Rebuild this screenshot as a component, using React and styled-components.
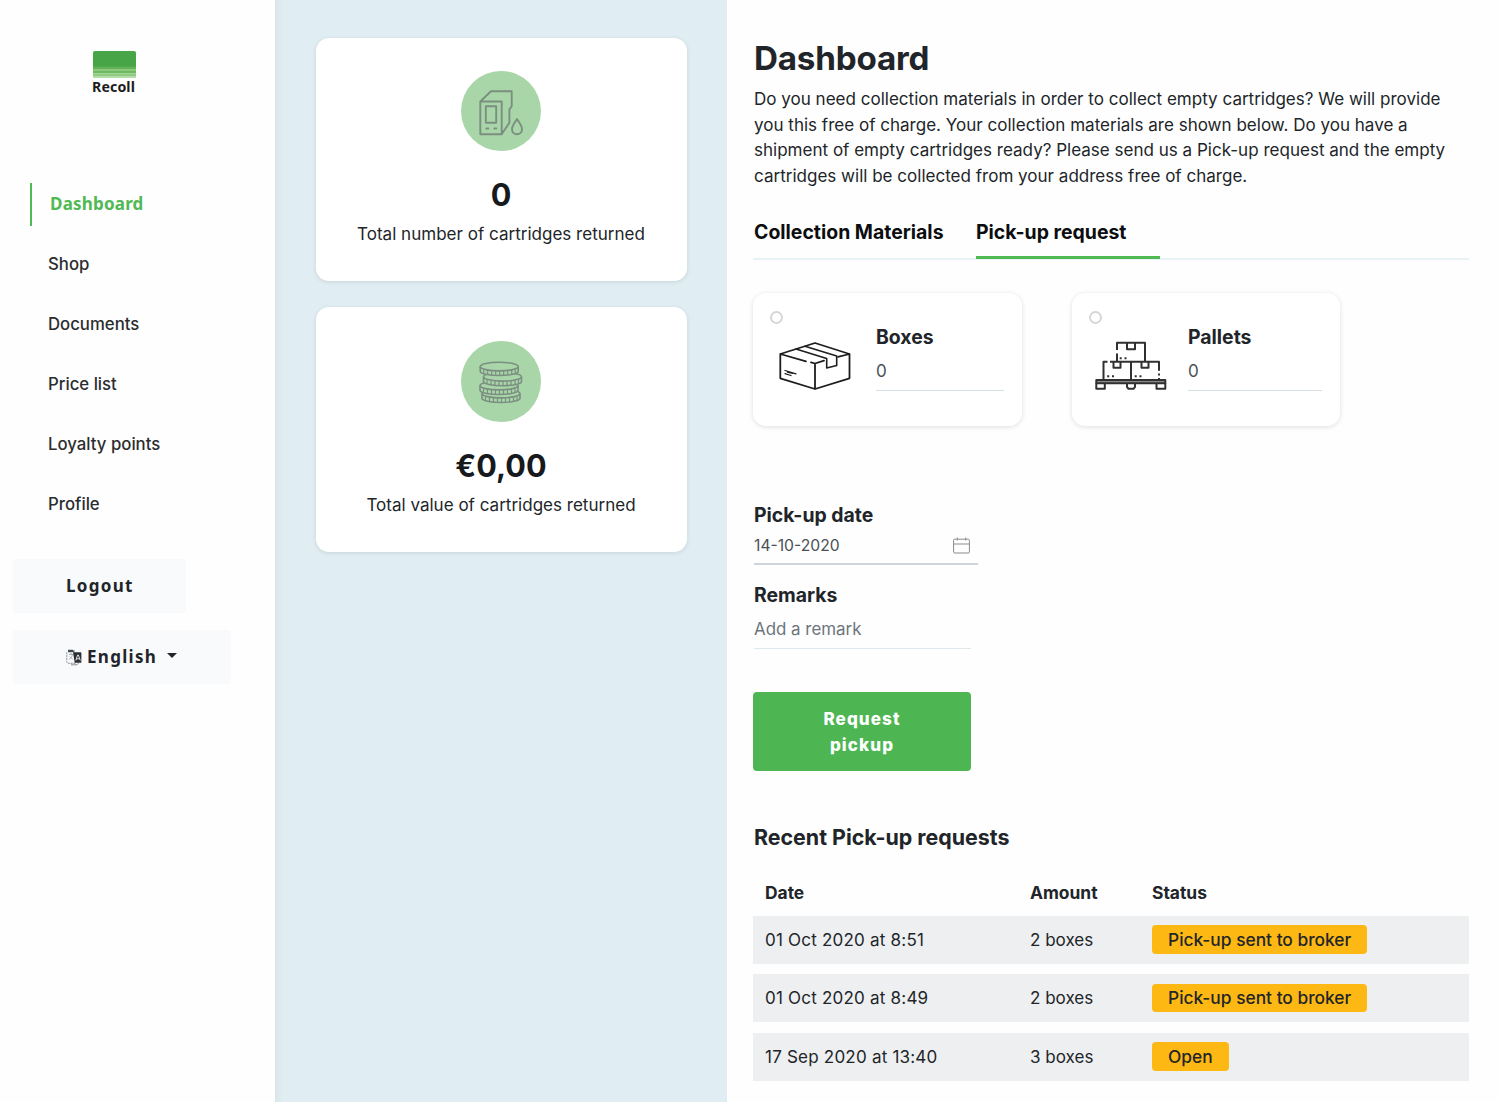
import React from "react";
import styled, { createGlobalStyle, css } from "styled-components";

const GlobalStyle = createGlobalStyle`
  * { box-sizing: border-box; }
  body {
    margin: 0;
    background: #fefefe;
    color: #212529;
    font-family: Inter, "Liberation Sans", sans-serif;
    font-size: 17.05px;
    line-height: 25.6px;
  }
  button, input { font: inherit; color: inherit; }
  h1, h2, h3, p { margin: 0; }
`;

const Layout = styled.div`
  display: grid;
  grid-template-columns: 275px 452px 1fr;
  height: 1102px;
  overflow: hidden;
`;

/* ---------- sidebar ---------- */

const Sidebar = styled.aside`
  display: flex;
  flex-direction: column;
  align-items: flex-start;
  padding: 51px 13px 0;
`;

const Brand = styled.div`
  display: flex;
  flex-direction: column;
  width: 45px;
  height: 132px;
  margin-left: 79px;
`;

const BrandMark = styled.div`
  height: 27px;
  width: 43px;
  margin-left: 1px;
  border-radius: 2px 2px 0 0;
  background: linear-gradient(
    #48a547 0 15px,
    #64b257 16.5px 18px,
    #8cc97c 18.5px 19.5px,
    #6fba61 20px 21.5px,
    #a2d596 22px 23px,
    #8fcb82 23.5px 24.5px,
    #b4ddaa 25px
  );
`;

const BrandName = styled.span`
  font: 700 14.2px/18px "Noto Sans", sans-serif;
  letter-spacing: 0.1px;
  color: #1c1c1c;
`;

const Nav = styled.nav`
  display: flex;
  flex-direction: column;
  gap: 17px;
  margin-left: 17px;
`;

const NavItem = styled.a`
  display: flex;
  align-items: center;
  height: 43px;
  padding-left: 16px;
  border-left: 2px solid transparent;
  font-size: 16.75px;
  font-weight: 500;
  color: #2b2d2f;
  ${(p) =>
    p.$active &&
    css`
      padding: 0 0 2px 18px;
      border-color: #50b954;
      color: #50b954;
      font-family: "Noto Sans", sans-serif;
      font-size: 17px;
      font-weight: 700;
      letter-spacing: 0.2px;
    `}
`;

const SideButton = styled.button`
  display: flex;
  align-items: center;
  gap: 5px;
  width: ${(p) => p.$width}px;
  height: 54px;
  margin-top: ${(p) => p.$top}px;
  padding: 0 0 0 53px;
  border: 0;
  border-radius: 3px;
  background: #f9fafb;
  font-family: "Noto Sans", sans-serif;
  font-size: 17px;
  font-weight: 700;
  letter-spacing: 1.3px;
`;

const Caret = styled.span`
  margin: -3px 0 0 5px;
  border: 5px solid transparent;
  border-top-color: #212529;
  border-bottom: 0;
`;

/* ---------- statistics ---------- */

const Stats = styled.section`
  display: flex;
  flex-direction: column;
  gap: 26px;
  padding: 37.5px 40.5px 0;
  background: linear-gradient(90deg, #d8e5e9, #e0edf2 8px);
`;

const StatCard = styled.article`
  display: flex;
  flex-direction: column;
  align-items: center;
  height: ${(p) => p.$height}px;
  padding-top: ${(p) => p.$top}px;
  border-radius: 13px;
  background: #fff;
  box-shadow: 0 1px 4px rgba(60, 70, 70, 0.14);
`;

const StatIcon = styled.div`
  width: 80px;
  height: ${(p) => p.$height}px;
  border-radius: 50%;
  background: #a9d6a8;
`;

const StatValue = styled.strong`
  margin-top: 25px;
  font-size: 30.6px;
  line-height: 38px;
  color: #171a1d;
`;

const StatLabel = styled.span`
  margin-top: 7px;
`;

/* ---------- main ---------- */

const Main = styled.main`
  display: flex;
  flex-direction: column;
  align-items: flex-start;
  padding: 38px 30px 0 26px;
`;

const Title = styled.h1`
  margin-left: 1px;
  font-size: 33.2px;
  line-height: 40px;
  letter-spacing: -0.2px;
`;

const Intro = styled.p`
  width: 710px;
  margin: 8px 0 0 1px;
`;

const Tabs = styled.div`
  display: flex;
  width: 716px;
  height: 43px;
  margin: 29px 0 0 0;
  padding-left: 1px;
  border-bottom: 2px solid #e8f1f4;
`;

const Tab = styled.div`
  width: ${(p) => p.$width}px;
  height: 42px;
  padding-top: 3px;
  border-bottom: 3px solid ${(p) => (p.$active ? "#50b954" : "transparent")};
  font-size: 19.45px;
  font-weight: 700;
  color: #0b0d0f;
`;

const Options = styled.div`
  display: flex;
  gap: 50px;
  margin-top: 33px;
`;

const Option = styled.label`
  display: grid;
  grid-template-columns: ${(p) => p.$icon}px 1fr;
  width: ${(p) => p.$width}px;
  height: 133px;
  padding: 18px 18px 0 17px;
  border-radius: 13px;
  background: #fff;
  box-shadow: 0 1px 5px rgba(0, 0, 0, 0.13);
`;

const OptionPicture = styled.div`
  display: flex;
  flex-direction: column;
  gap: 17px;
`;

const Radio = styled.span`
  width: 13px;
  height: 13px;
  border: 2px solid #d6d6d6;
  border-radius: 50%;
  background: #fff;
`;

const OptionFields = styled.div`
  display: flex;
  flex-direction: column;
  padding-top: 14px;
`;

const FieldTitle = styled.h3`
  font-size: 19.4px;
  font-weight: 700;
  line-height: 25px;
`;

const Quantity = styled.span`
  height: 41px;
  padding-top: 8px;
  border-bottom: 1.5px solid #d6e0e4;
  color: #495057;
`;

const Form = styled.form`
  display: flex;
  flex-direction: column;
  align-items: flex-start;
  margin: 77px 0 0 1px;
`;

const DateField = styled.div`
  display: flex;
  justify-content: space-between;
  align-items: center;
  width: 224px;
  height: 37px;
  margin-bottom: 18px;
  padding: 0 8px 1px 0;
  border-bottom: 2px solid #ced6dc;
  font-size: 15.7px;
  color: #495057;
`;

const RemarkField = styled.input`
  width: 217px;
  height: 41px;
  padding: 1px 0 0;
  border: 0;
  border-bottom: 1.5px solid #dfe8ec;
  background: none;
  font-size: 16.9px;
  &::placeholder { color: #6c757d; opacity: 1; }
`;

const Submit = styled.button`
  width: 218px;
  height: 79px;
  margin: 43px 0 0 -1px;
  padding: 0 60px;
  border: 0;
  border-radius: 4px;
  background: #4db653;
  color: #fff;
  font-weight: 800;
  line-height: 25.4px;
  letter-spacing: 1.1px;
`;

const RecentTitle = styled.h2`
  margin: 52px 0 0 1px;
  font-size: 21.4px;
  line-height: 28px;
`;

const Requests = styled.div`
  display: flex;
  flex-direction: column;
  gap: 10.4px;
  width: 716px;
  margin-top: 28px;
`;

const Row = styled.div`
  display: grid;
  grid-template-columns: 265px 122px 1fr;
  align-items: center;
  height: 48px;
  padding-left: 12px;
  background: #eeeff1;
`;

const HeadRow = styled(Row)`
  height: 26px;
  background: none;
  font-size: 17.4px;
  font-weight: 700;
`;

const DateCell = styled.span`
  letter-spacing: 0.2px;
`;

const Badge = styled.span`
  justify-self: start;
  padding: 1.5px 16px;
  border-radius: 4px;
  background: #fdb813;
  font-size: 17.35px;
  font-weight: 500;
`;

/* ---------- icons ---------- */

const CartridgeIcon = () => (
  <svg width="80" height="80" viewBox="0 0 80 80" fill="none" stroke="#7b8f80" strokeWidth="1.9" strokeLinejoin="round" strokeLinecap="round">
    <path d="M19.3 30.5h21.4v32.7H19.3zM19.3 30.5 30 20.3h20.7v15l-2.3 3v13.5l-7.7 11.4" />
    <path d="M24.8 35.3h10.4v16.4H24.8zM25.3 57.5h2M33.3 57.5h2" />
    <path d="M56 48c2.8 4.4 5 7 5 10.2a5 5 0 0 1-10 0C51 55 53.2 52.4 56 48z" />
  </svg>
);

const COINS = [
  { x: 21, y: 52.6 },
  { x: 19, y: 44.6 },
  { x: 22.5, y: 35.8 },
  { x: 19.2, y: 25.6 },
];
const TICKS = [3.5, 7.5, 11.5, 15.5, 19.5, 23.5, 27.5, 31.5, 35];
const sag = (t) => 4.2 * Math.sqrt(Math.max(0, 1 - ((t - 19) / 19) ** 2));

const CoinsIcon = () => (
  <svg width="80" height="80" viewBox="0 0 80 80" fill="#a9d6a8" stroke="#7b8f80" strokeWidth="1.6">
    {COINS.map((c) => (
      <g key={c.y} transform={`translate(${c.x} ${c.y})`}>
        <path d="M0 0v4.6c0 2.4 8.5 4.3 19 4.3s19-1.9 19-4.3V0" />
        <ellipse cx="19" cy="0" rx="19" ry="4.3" />
        {TICKS.map((t) => (
          <path key={t} strokeWidth="1.2" d={`M${t} ${sag(t)}v4.6`} />
        ))}
      </g>
    ))}
  </svg>
);

const BoxIcon = () => (
  <svg width="72" height="49" viewBox="0 0 72 49" fill="none" stroke="#1d1d1d" strokeWidth="1.8" strokeLinejoin="round" strokeLinecap="round" transform="translate(9 1)">
    <path d="M27 19.3 1.3 12 36 1l34.5 11v24.3L36 47 1.3 36.3V12M36 47V21.5l-4-1.1M36 21.5l9-2.8M59 14.8 70.5 12" />
    <path strokeWidth="1.6" d="M17 7l30.7 9.5M26 4.2l31.7 9.8M47.7 16.5V26l10-2.6V14" />
    <path strokeWidth="1.3" d="M6 28.5l11 3.3M6 31.7l6 1.8M8.5 30l5 1.3" />
  </svg>
);

const PalletIcon = () => (
  <svg width="72" height="50" viewBox="0 0 72 50" fill="none" stroke="#303030" strokeWidth="2" strokeLinejoin="round" transform="translate(6 -1)">
    <path d="M22 10V2.7h28v19M22 13.5v8.2M8.5 40V21.7h4M15 21.7h49v9M64 33.5v2M64 38v2M36 21.7V40" />
    <path d="M32 2.7v6.5h8V2.7M18.5 21.7v6h7v-6M46.5 21.7v6h7v-6" />
    <path fill="#888" d="M1.3 40h69v3.3h-69z" />
    <path d="M1.3 43.3v5.5h8.5v-5.5M32 43.3v3.5l1.5 2h5l1.5-2v-3.5M61.5 43.3v5.5h8.8v-5.5" />
    <path strokeDasharray="2 2.8" d="M24.7 18.3h7M12.2 36.3h7M39.7 36.3h7" />
  </svg>
);

const CalendarIcon = () => (
  <svg width="17" height="17" viewBox="0 0 17 17" fill="none" stroke="#8b8b8b" strokeWidth="1">
    <rect x=".6" y="2.2" width="15.8" height="13.8" rx="1" />
    <path d="M.6 7h15.8M4.3.5v3M12.7.5v3" />
  </svg>
);

const LanguageIcon = () => (
  <svg width="16" height="17" viewBox="0 0 16 17" fill="none">
    <path d="M2 1.5h6.5l1.2 12.8H2.3A1.5 1.5 0 0 1 .8 12.8V3" stroke="#8a8d90" strokeWidth="1" strokeDasharray="2 .8" />
    <path d="M3 5.5h4M5 4v1.5M6.5 5.500C6 8 4.5 9.5 3 10.5M3.8 7.5l3 3" stroke="#9a9da0" strokeWidth=".8" />
    <path d="M2 .8h5l1.3 2.5H2z" fill="#44484c" />
    <path d="M7 3.2h7.2c.7 0 1.2.5 1.2 1.2v9.4H8.7z" fill="#2a2e32" />
    <path d="M9.8 11.5l1.8-5.500h.8l1.9 5.500M10.4 9.8h3.2" stroke="#dfe1e3" strokeWidth="1" />
    <path d="M5 15.8h6l2-2" stroke="#8a8d90" />
  </svg>
);

/* ---------- page ---------- */

const NAV = ["Dashboard", "Shop", "Documents", "Price list", "Loyalty points", "Profile"];
const REQUESTS = [
  { date: "01 Oct 2020 at 8:51", amount: "2 boxes", status: "Pick-up sent to broker" },
  { date: "01 Oct 2020 at 8:49", amount: "2 boxes", status: "Pick-up sent to broker" },
  { date: "17 Sep 2020 at 13:40", amount: "3 boxes", status: "Open" },
];

export default function App() {
  return (
    <>
      <GlobalStyle />
      <Layout>
        <Sidebar>
          <Brand>
            <BrandMark />
            <BrandName>Recoll</BrandName>
          </Brand>
          <Nav>
            {NAV.map((name, i) => (
              <NavItem key={name} $active={i === 0}>{name}</NavItem>
            ))}
          </Nav>
          <SideButton $width={173} $top={33}>Logout</SideButton>
          <SideButton $width={218} $top={17}>
            <LanguageIcon />
            English
            <Caret />
          </SideButton>
        </Sidebar>

        <Stats>
          <StatCard $height={243.5} $top={33.5}>
            <StatIcon $height={80}><CartridgeIcon /></StatIcon>
            <StatValue>0</StatValue>
            <StatLabel>Total number of cartridges returned</StatLabel>
          </StatCard>
          <StatCard $height={245} $top={34}>
            <StatIcon $height={81}><CoinsIcon /></StatIcon>
            <StatValue>€0,00</StatValue>
            <StatLabel>Total value of cartridges returned</StatLabel>
          </StatCard>
        </Stats>

        <Main>
          <Title>Dashboard</Title>
          <Intro>
            Do you need collection materials in order to collect empty cartridges? We will provide
            you this free of charge. Your collection materials are shown below. Do you have a
            shipment of empty cartridges ready? Please send us a Pick-up request and the empty
            cartridges will be collected from your address free of charge.
          </Intro>
          <Tabs>
            <Tab $width={222}>Collection Materials</Tab>
            <Tab $width={184} $active>Pick-up request</Tab>
          </Tabs>
          <Options>
            <Option $width={269} $icon={106}>
              <OptionPicture>
                <Radio />
                <BoxIcon />
              </OptionPicture>
              <OptionFields>
                <FieldTitle>Boxes</FieldTitle>
                <Quantity>0</Quantity>
              </OptionFields>
            </Option>
            <Option $width={268} $icon={99}>
              <OptionPicture>
                <Radio />
                <PalletIcon />
              </OptionPicture>
              <OptionFields>
                <FieldTitle>Pallets</FieldTitle>
                <Quantity>0</Quantity>
              </OptionFields>
            </Option>
          </Options>
          <Form>
            <FieldTitle>Pick-up date</FieldTitle>
            <DateField>
              14-10-2020
              <CalendarIcon />
            </DateField>
            <FieldTitle>Remarks</FieldTitle>
            <RemarkField placeholder="Add a remark" />
            <Submit type="button">Request pickup</Submit>
          </Form>
          <RecentTitle>Recent Pick-up requests</RecentTitle>
          <Requests>
            <HeadRow>
              <span>Date</span>
              <span>Amount</span>
              <span>Status</span>
            </HeadRow>
            {REQUESTS.map((r) => (
              <Row key={r.date}>
                <DateCell>{r.date}</DateCell>
                <span>{r.amount}</span>
                <Badge>{r.status}</Badge>
              </Row>
            ))}
          </Requests>
        </Main>
      </Layout>
    </>
  );
}
